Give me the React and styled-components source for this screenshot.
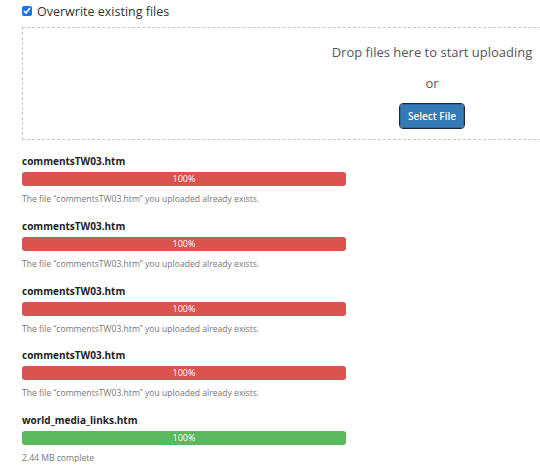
import React from "react";
import styled, { createGlobalStyle } from "styled-components";

const Global = createGlobalStyle`
  html, body { margin: 0; padding: 0; background: #fff; overflow: hidden; }
  body { font-family: "Open Sans", "Liberation Sans", sans-serif; color: #333; }
`;

const Page = styled.div`
  padding: 4px 0 0 22px;
  width: 540px;
  height: 468px;
  box-sizing: border-box;
  overflow: hidden;
`;

const OptionRow = styled.label`
  display: flex;
  align-items: center;
  gap: 5px;
  height: 14px;
  font-size: 12.5px;
  color: #333;
`;

const Check = styled.input`
  margin: 0;
  width: 10px;
  height: 10px;
  accent-color: #1a73e8;
`;

const DropZone = styled.div`
  margin-top: 9px;
  width: 820px;
  height: 113px;
  box-sizing: border-box;
  border: 1px dashed #c8c8c8;
  display: flex;
  flex-direction: column;
  align-items: center;
  padding-top: 15px;
`;

const DropText = styled.div`
  font-size: 13px;
  color: #555;
  line-height: 18px;
`;

const OrText = styled.div`
  font-size: 13px;
  color: #555;
  line-height: 18px;
  margin-top: 13px;
`;

const SelectButton = styled.button`
  margin-top: 12px;
  width: 64px;
  height: 24px;
  background: #337ab7;
  color: #fff;
  border: 1px solid #2e6da4;
  border-radius: 3px;
  outline: 1px solid #1d2b3a;
  font-family: inherit;
  font-size: 10px;
  font-weight: 600;
  padding: 0;
`;

const FileList = styled.div`
  margin-top: 15px;
  width: 324px;
  display: flex;
  flex-direction: column;
  gap: 14.75px;
`;

const FileItem = styled.div`
  display: flex;
  flex-direction: column;
`;

const FileName = styled.div`
  font-size: 10px;
  font-weight: 700;
  color: #222;
  line-height: 13px;
`;

const Bar = styled.div`
  margin-top: 4px;
  height: 14px;
  border-radius: 3px;
  background: ${(p) => (p.$ok ? "#5cb85c" : "#d9534f")};
  color: #fff;
  font-size: 9px;
  line-height: 14px;
  text-align: center;
`;

const Note = styled.div`
  margin-top: 7px;
  font-size: 8.6px;
  color: #777;
  line-height: 12px;
`;

const files = [
  { name: "commentsTW03.htm", ok: false, note: "The file “commentsTW03.htm” you uploaded already exists." },
  { name: "commentsTW03.htm", ok: false, note: "The file “commentsTW03.htm” you uploaded already exists." },
  { name: "commentsTW03.htm", ok: false, note: "The file “commentsTW03.htm” you uploaded already exists." },
  { name: "commentsTW03.htm", ok: false, note: "The file “commentsTW03.htm” you uploaded already exists." },
  { name: "world_media_links.htm", ok: true, note: "2.44 MB complete" },
];

export default function App() {
  return (
    <>
      <Global />
      <Page>
        <OptionRow>
          <Check type="checkbox" defaultChecked />
          Overwrite existing files
        </OptionRow>
        <DropZone>
          <DropText>Drop files here to start uploading</DropText>
          <OrText>or</OrText>
          <SelectButton>Select File</SelectButton>
        </DropZone>
        <FileList>
          {files.map((f, i) => (
            <FileItem key={i}>
              <FileName>{f.name}</FileName>
              <Bar $ok={f.ok}>100%</Bar>
              <Note>{f.note}</Note>
            </FileItem>
          ))}
        </FileList>
      </Page>
    </>
  );
}
